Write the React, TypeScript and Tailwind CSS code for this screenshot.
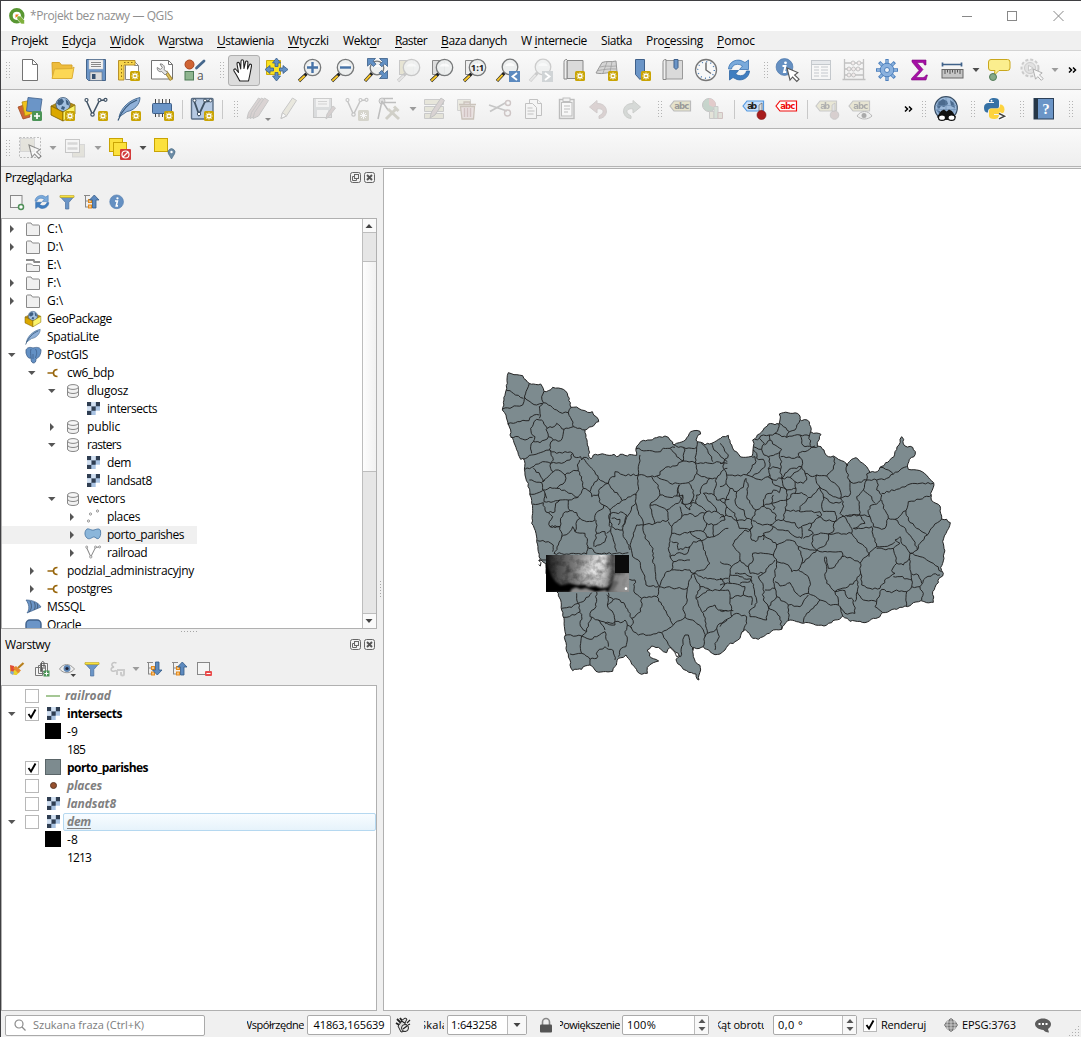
import React, { useLayoutEffect, useRef } from 'react';

/* ---------- text helper: spreads a label over a given width ---------- */
function Fit({ w, children, className = '' }: { w: number; children: string; className?: string }) {
  const ref = useRef<HTMLSpanElement>(null);
  useLayoutEffect(() => {
    const el = ref.current;
    if (!el) return;
    el.style.letterSpacing = '0px';
    const natural = el.getBoundingClientRect().width;
    el.style.letterSpacing = (w - natural) / children.length + 'px';
  }, [w, children]);
  return (
    <span ref={ref} className={'inline-block shrink-0 whitespace-pre ' + className}>
      {children}
    </span>
  );
}

/* ---------- icon primitives ---------- */
type P = { children?: React.ReactNode };
const I = ({ children }: P) => (
  <svg viewBox="0 0 24 24" className="h-6 w-6 shrink-0 overflow-visible" fill="none">
    {children}
  </svg>
);
const S = ({ children }: P) => (
  <svg viewBox="0 0 16 16" className="h-4 w-4 shrink-0 overflow-visible" fill="none">
    {children}
  </svg>
);
const Star = ({ x = 13, y = 13 }: { x?: number; y?: number }) => (
  <g transform={`translate(${x} ${y})`}>
    <rect width="10" height="10" rx="1.500" fill="#c9a404" />
    <path d="M5 1.500v7M1.500 5h7M2.500 2.500l5 5M7.500 2.500l-5 5" stroke="#fff" strokeWidth="1.100" />
    <circle cx="5" cy="5" r="1.100" fill="#c9a404" />
  </g>
);
const Lens = ({ cx = 14.5, cy = 9.5, r = 8.2, dim = false }: { cx?: number; cy?: number; r?: number; dim?: boolean }) => (
  <>
    <path d={`M1 23L${cx - r * 0.72} ${cy + r * 0.75}`} stroke={dim ? '#aaa' : '#222'} strokeWidth="3.2" />
    <path d={`M1.3 22.700L${cx - r * 0.95} ${cy + r * 1}`} stroke={dim ? '#ddd' : '#f5c52a'} strokeWidth="2" />
    <circle cx={cx} cy={cy} r={r} fill="#eceeee" fillOpacity=".93" stroke={dim ? '#aaa' : '#77797a'} strokeWidth="1.3" />
    <path d={`M${cx - r * 0.6} ${cy - 1}a${r * 0.65} ${r * 0.6} 0 0 1 ${r * 1.2} 0`} fill="#fff" opacity=".75" />
  </>
);
const Cursor = ({ x = 11, y = 10 }: { x?: number; y?: number }) => (
  <path transform={`translate(${x} ${y})`} d="M0 0l3 12 2.6-3 4.2 4.4 2.2-2.2-4.4-4.2 3.2-2.4z" fill="#fff" stroke="#555" strokeWidth="1.1" />
);

const NewFile = () => <I><path d="M4.5 1.5h10l5 5v16h-15z" fill="#fff" stroke="#737373" /><path d="M14.5 1.5v5h5" stroke="#737373" /></I>;
const Folder = () => <I><path d="M1 4.500h7.500l2 2.500H21v4H5L1.500 20z" fill="#eebc3c" stroke="#d6a32b" /><path d="M1 20.500l2.500-9.500 17.500-.5 2-1.500-2 11.500z" fill="#fcd755" stroke="#dcae35" /></I>;
const Save = () => <I><path d="M2.500 1.500h19v21h-17l-2-2z" fill="#6b95c7" stroke="#45658b" /><rect x="5" y="2" width="14" height="9" fill="#f3f3f3" stroke="#ccc" strokeWidth=".5" /><path d="M7 4.500h10M7 6.500h10M7 8.500h10" stroke="#888" /><rect x="6" y="14" width="12" height="8.500" fill="#dcdcdc" stroke="#5b6b80" strokeWidth=".6" /><rect x="8" y="16" width="3.500" height="5" fill="#35506f" /></I>;
const Layout = () => <I><path d="M8.500 3.500h9l4 4v14h-13z" fill="#fff" stroke="#888" /><path d="M17.500 3.500v4h4" stroke="#888" /><path d="M1.500 2.500h16.500v4.500h-11v15H1.500z" fill="#f7d54b" stroke="#b8912a" /><path d="M7 4.500h1.500M10.500 4.500h1.500M14 4.500h1.500M4.500 7v1.500M4.500 10.500v1.500M4.500 14v1.500M4.500 17.500v1.500" stroke="#8c6d1a" /><Star /></I>;
const Manager = () => <I><path d="M1.500 2.500h17l4 4v14.500h-21z" fill="#fff" stroke="#737373" /><path d="M18.500 2.500v4h4" stroke="#737373" /><path d="M15.500 13.500l6 8.500" stroke="#a5842a" strokeWidth="3.600" /><path d="M15.500 13.500l5.500 8" stroke="#dcc160" strokeWidth="1.600" /><path d="M10 6c3-.5 5.500 2.500 4 5.500l3.500 3-2.300 2.500-3.500-3.500C9 14.500 6.800 12 7.300 9.500l3 2 2-2z" fill="#e5e5e5" stroke="#777" strokeWidth=".9" /></I>;
const StyleIcon = () => <I><circle cx="6.500" cy="6.500" r="4.500" fill="#cf6434" stroke="#a8441d" /><path d="M13.500 10l7.500-7" stroke="#46688d" strokeWidth="2.800" strokeLinecap="round" /><rect x="2" y="13.500" width="8.500" height="8.500" fill="#8fb58f" stroke="#4d7a55" /><text x="14" y="21.500" fontSize="12" fill="#555" fontFamily="Open Sans, sans-serif">a</text></I>;
const Hand = () => <I><path d="M7.500 21.500L4.500 16 2 12c-1-1.600 1-2.700 2-1.500l2.500 2.800L5 5c-.3-1.900 2.100-2.200 2.500-.5l1.200 5.500L9 2.200c.1-1.900 2.400-1.900 2.600 0l.4 7.200L13.500 3c.5-1.700 2.600-1.200 2.400.5l-.4 6.500 1.800-4c.7-1.500 2.600-.7 2.200.9l-1.500 8.100-1.500 7H8z" fill="#fff" stroke="#222" strokeWidth="1.100" strokeLinejoin="round" /></I>;
const PanSel = () => <I><path d="M1.500 2.500h14v14h-14z" fill="#fbe21e" stroke="#cdab0d" /><path d="M11.500 0l4 5h-2.500v3.500h-3V5H7.500zM11.500 23l4-5h-2.500v-3.500h-3V18H7.500zM0 11.500l5-4V10h3.500v3H5v2.500zM23 11.500l-5-4V10h-3.500v3H18v2.500z" fill="#6290c4" stroke="#3b5e88" strokeWidth=".8" /></I>;
const ZoomIn = () => <I><Lens /><path d="M14.500 4v11M9 9.500h11" stroke="#4673a8" strokeWidth="2.400" /></I>;
const ZoomOut = () => <I><Lens /><path d="M9 9.500h11" stroke="#4673a8" strokeWidth="2.400" /></I>;
const ZoomFull = () => <I><Lens cx={13} cy={10} r={6.800} /><path d="M3.500.5h8l-2.500 2.600 3 3-2.500 2.500-3-3-3 2.500zM23.500.5v8l-2.700-2.700-3 3-2.200-2.200 3-3L15.500.5zM23.500 20.500h-8l2.700-2.700-3-3 2.400-2.300 3 3 2.900-2.900z" fill="#6290c4" stroke="#3b5e88" strokeWidth=".8" /></I>;
const ZoomSel = () => <I><g opacity=".6"><rect x="2.500" y="2.500" width="14" height="14" fill="#ddd9bd" stroke="#aaa" /><Lens dim /></g></I>;
const ZoomLayer = () => <I><path d="M2.500 2.500h12v14h-12z" fill="#ddd" stroke="#888" /><Lens /></I>;
const ZoomNative = () => <I><path d="M2.500 2.500h12v14h-12z" fill="#eee" stroke="#888" /><Lens /><text x="14.500" y="13" fontSize="9.500" fontWeight="700" fill="#222" textAnchor="middle" fontFamily="Open Sans, sans-serif">1:1</text></I>;
const ZoomLast = () => <I><Lens cx={14} cy={9} r={7.800} /><rect x="13" y="13" width="11" height="11" fill="#5c8abf" /><path d="M21 15l-4.500 3.500L21 22" stroke="#fff" strokeWidth="1.900" /></I>;
const ZoomNext = () => <I><g opacity=".55"><Lens cx={14} cy={9} r={7.800} dim /></g><rect x="13" y="13" width="11" height="11" fill="#d0d4d6" /><path d="M16 15l4.500 3.500L16 22" stroke="#fff" strokeWidth="1.900" /></I>;
const NewMap = () => <I><path d="M5 2.500h16v18H5z" fill="#dadada" stroke="#888" /><path d="M5 1.500c-2.500 0-3 1-3 3v16.500h3V3" fill="#eee" stroke="#888" /><Star x={13} y={13} /></I>;
const New3D = () => <I><path d="M7 4.500c5-2 9 0 14-1.500l1 11c-7-1-13 3-21 1z" fill="#d5d5d5" stroke="#999" /><path d="M12 4l-4 11M17 3.500l-2 11M5 9c6-2 10 0 16-1M3 12.500c6-1 12-2 18-1.500" stroke="#999" strokeWidth=".7" /><Star x={13} y={13} /></I>;
const Bookmark = () => <I><path d="M7.500 1.500h9v15l-4.500 5-4.500-5z" fill="#6b95c7" stroke="#3f608a" /><Star x={13} y={13} /></I>;
const Bookmarks = () => <I><path d="M4 2.500h17.500v18.500H4z" fill="#dadada" stroke="#999" /><path d="M5 1.500c-2.500 0-3 1-3 3v17h3z" fill="#eee" stroke="#888" /><path d="M13 1.500h4v8l-2 2-2-2z" fill="#6b95c7" stroke="#3f608a" /></I>;
const Clock = () => <I><circle cx="12" cy="12" r="10.500" fill="#f8f8f8" stroke="#777" strokeWidth="1.300" /><circle cx="12" cy="12" r="8.300" stroke="#4d7eb5" strokeWidth="1.400" strokeDasharray="1 3.345" /><path d="M12 4.500V12l5 3.500" stroke="#666" strokeWidth="1.400" /></I>;
const RefreshG = () => <g><path d="M1.500 11C2 4 8.500 1 14 2.500l4 2L21.500 2v9.500h-9l3-3.500C11.500 5 5.500 6 4.500 11z" fill="#7aaadb" stroke="#3b73b3" strokeWidth=".8" /><path d="M22.500 13C22 20 15.500 23 10 21.500l-4-2L2.500 22v-9.500h9l-3 3.500c4 3 10 2 11-3z" fill="#3f7dc0" stroke="#2f67a6" strokeWidth=".8" /></g>;
const Refresh = () => <I><RefreshG /></I>;
const InfoDisc = () => <g><circle cx="8.500" cy="9" r="8.400" fill="#6590c2" stroke="#4a76aa" strokeWidth=".7" /><circle cx="9.500" cy="4.800" r="1.400" fill="#fff" /><path d="M6.500 8h3l-1.500 6h2.200" stroke="#fff" strokeWidth="1.900" /></g>;
const Identify = () => <I><InfoDisc /><Cursor x={11} y={10} /></I>;
const Table = () => <I><g opacity=".6"><rect x="2.500" y="2.500" width="19" height="19" fill="#fafafa" stroke="#a5acb3" /><rect x="3" y="3" width="18" height="3.500" fill="#dde1e6" /><path d="M5 9h5M5 12h5M5 15h5M5 18h5M12 9h7M12 12h7M12 15h7M12 18h7M3 6.500h18" stroke="#a5acb3" strokeWidth="1.200" /></g></I>;
const Abacus = () => <I><g opacity=".55" stroke="#999"><path d="M2.500 1v20M21.500 1v20M2.500 5h19M2.500 11h19M2.500 17h19M.5 21.500h23" strokeWidth="1.300" /><g fill="#f0e4e4"><circle cx="11" cy="5" r="2" /><circle cx="17" cy="5" r="2" /><circle cx="7" cy="11" r="2" /><circle cx="11.500" cy="11" r="2" /><circle cx="16" cy="11" r="2" /><circle cx="7" cy="17" r="2" /><circle cx="11.500" cy="17" r="2" /></g></g></I>;
const Gear = () => <I><g stroke="#4d80bd" strokeWidth="3.300"><path d="M12 1v22M1 12h22M4.200 4.200l15.600 15.600M19.800 4.200L4.200 19.800" /></g><g stroke="#8ab1de" strokeWidth="1.800"><path d="M12 2v20M2 12h20M5 5l14 14M19 5L5 19" /></g><circle cx="12" cy="12" r="6.800" fill="#8ab1de" stroke="#4d80bd" /><circle cx="12" cy="12" r="2.500" fill="#eff3f8" stroke="#4d80bd" /></I>;
const Sigma = () => <I><path d="M4 2h14v5h-1.500c-.5-2-1.500-2.500-3.500-2.500H9l6 7-7 8h6.500c2 0 3-1 3.500-2.500h1.500L18 22H3.500v-1.500l7.500-8L4 4z" fill="#a50fa5" stroke="#7d0a7d" strokeWidth=".6" /></I>;
const Ruler = () => <I><path d="M1.500 6.500h19M1.500 4.500v4M20.500 4.500v4" stroke="#3f6189" strokeWidth="1.700" /><rect x="1" y="11.500" width="21" height="8.500" fill="#c6c6c6" stroke="#666" /><path d="M4 12v4M6.500 12v2.500M9 12v4M11.500 12v2.500M14 12v4M16.500 12v2.500M19 12v4" stroke="#555" /></I>;
const Tip = () => <I><path d="M4 1.500h16.500a2.500 2.500 0 0 1 2.500 2.500v6a2.500 2.500 0 0 1-2.500 2.500H12l-5 5 1-5H4A2.500 2.500 0 0 1 1.500 10V4A2.500 2.500 0 0 1 4 1.500z" fill="#fbee8e" stroke="#c9a71d" /><circle cx="6" cy="19" r="3.500" fill="#86a987" stroke="#537b58" /></I>;
const GearRun = () => <I><g opacity=".45"><circle cx="10" cy="10" r="8.500" fill="#e5e5e5" stroke="#999" strokeWidth="2" strokeDasharray="3 2" /><circle cx="10" cy="10" r="5.500" fill="#ccc" stroke="#999" /><path d="M8.500 7.500l4.500 2.500-4.500 2.500z" fill="#fff" stroke="#777" strokeWidth=".7" /><g transform="translate(13 11) scale(.85)"><Cursor x={0} y={0} /></g></g></I>;

const DataSrc = () => <I><path d="M0 10l9-3 3 13-7 2z" fill="#cf6434" stroke="#a04a21" strokeWidth=".8" /><path d="M4 5l10-2 2 13-9 3z" fill="#f0c21b" stroke="#b58d12" strokeWidth=".8" /><path d="M10 .500l14 1.500-2 14-13.500-2z" fill="#6b95c7" stroke="#3f608a" strokeWidth=".8" /><rect x="14" y="14" width="10" height="10" rx="1.500" fill="#4b9457" /><path d="M19 16v6M16 19h6" stroke="#fff" strokeWidth="1.700" /></I>;
const BoxG = () => (
  <g>
    <path d="M0 9L12 3l12 5-12 7z" fill="#b58d12" stroke="#7b5d00" strokeWidth=".6" />
    <circle cx="12" cy="7.500" r="7" fill="#a3c0e0" stroke="#3e5876" strokeWidth=".8" />
    <path d="M7 3l4-1.500 2 3-2 3-3 1-2-2zM14.500 2l3 2.500.5 4-2.500-1zM11 9l3 1-1 3-3-1z" fill="#3f5f82" />
    <path d="M0 9l12 6v9L0 18z" fill="#dba800" stroke="#7b5d00" strokeWidth=".8" />
    <path d="M12 15l12-7v9l-12 7z" fill="#fbf36b" stroke="#8a7000" strokeWidth=".8" />
  </g>
);
const NewGpkg = () => <I><BoxG /><Star x={14} y={14} /></I>;
const Vg = ({ c = '#3f5163' }: { c?: string }) => <g stroke={c} fill="#fff" strokeWidth="1.200"><path d="M2.500 4L8.500 17.500 15.500 3.500 20.500 3" fill="none" strokeWidth="1.500" /><circle cx="2.500" cy="3" r="1.500" /><circle cx="8.500" cy="17.500" r="1.700" /><circle cx="15.500" cy="3" r="1.500" /><circle cx="21.500" cy="2.800" r="1.500" /></g>;
const NewShp = () => <I><Vg /><Star x={14} y={14} /></I>;
const FeatherG = () => <g><path d="M2 20C4 11 12 3 23 .5c0 7-6 13-13 14z" fill="#8fb0d8" stroke="#43688f" strokeWidth=".9" /><path d="M1 23.500C5 13 12 6 20 3" stroke="#345678" strokeWidth="1.200" /></g>;
const NewSpat = () => <I><FeatherG /><Star x={14} y={14} /></I>;
const Chip = () => <I><path d="M5.500 2v18M9 2v18M12.500 2v18M16 2v18M19.500 2v18" stroke="#444" strokeWidth="1" /><rect x="2.500" y="6.500" width="19" height="10" rx="1" fill="#6b95c7" stroke="#3f608a" /><Star x={14} y={14} /></I>;
const Virtual = () => <I><rect x="1.500" y="1.500" width="21.500" height="20.500" rx="1" fill="#b5c9e2" stroke="#5b6f86" strokeWidth="1.400" /><path d="M4 3.500l5 14 6-13 5-.5" stroke="#3f5163" strokeWidth="1.800" /><g fill="#fff" stroke="#3f5163"><circle cx="4.500" cy="3.500" r="1.500" /><circle cx="9" cy="17" r="1.700" /><circle cx="15" cy="3.500" r="1.500" /><circle cx="20.500" cy="3.500" r="1.500" /></g><Star x={14} y={14} /></I>;
const pencil = 'M2 21.500l1.500-6L13.500 1l4 2.500L7.500 19z';
const Pencils = () => <I><g opacity=".42" fill="#b5a5a5" stroke="#888"><path d={pencil} transform="translate(-1 0)" /><path d={pencil} transform="translate(2 0)" /><path d={pencil} transform="translate(5 0)" /></g><path d="M19 21h6l-3 3z" fill="#888" /></I>;
const Pencil = () => <I><g opacity=".5"><path d={pencil} fill="#dedbc8" stroke="#999" /><path d="M2 21.500l1.500-6 4 3.500z" fill="#fff" stroke="#999" /></g></I>;
const SaveEdit = () => <I><g opacity=".38"><rect x="1.500" y="1.500" width="18" height="19" fill="#b5b9bd" stroke="#888" /><rect x="4" y="2" width="13" height="8" fill="#eee" /><path d="M6 4.500h9M6 7h9" stroke="#999" /><rect x="5" y="13" width="11" height="7" fill="#eee" /><path d="M14 22l1-5 6-8 2.500 2-6 8z" fill="#a99" stroke="#888" /></g></I>;
const VNew = () => <I><g opacity=".38"><Vg c="#777" /><rect x="13" y="13" width="11" height="11" rx="1.500" fill="#a8a690" /><path d="M18.500 15v7M15 18.500h7M16 16l5 5M21 16l-5 5" stroke="#fff" /></g></I>;
const Vertex = () => <I><g opacity=".5" stroke="#888"><circle cx="4" cy="4" r="3" fill="#ccc" /><path d="M4 4L0 22M4 4l6 9M6 5.500h12M5 1.500h10" strokeWidth="1.500" /><path d="M8 22L18 12M10 12l11 10M16 9.500l4.500 4.500" strokeWidth="3" stroke="#b0ae9f" /></g></I>;
const EditAttr = () => <I><g opacity=".45"><path d="M1.500 2.500h19v5h-19zM1.500 9.500h19v5h-19zM1.500 16.500h19v5h-19z" fill="#d5d3bb" stroke="#999" /><path d="M7 21l1.500-6L18 1l3.500 2.500L12 18z" fill="#b9acac" stroke="#888" /></g></I>;
const Trash = () => <I><g opacity=".45"><path d="M1.500 2.500h13v11h-13z" fill="#dedcc8" stroke="#aaa" /><path d="M3 7.500h17M8 7V5h6v2M4.500 9.500h14l-1 12.500H6z" fill="#dcc" stroke="#987" strokeWidth="1.300" /><path d="M8.500 11v9M11.500 11v9M14.500 11v9" stroke="#a88" strokeWidth="1.500" /></g></I>;
const Cut = () => <I><g opacity=".5" stroke="#888" strokeWidth="1.400"><path d="M0 8l18 6M1 14.500L17 5.500" strokeWidth="1.800" stroke="#999" /><circle cx="19" cy="6" r="2.500" stroke="#a99" /><circle cx="18.500" cy="16" r="3" stroke="#a99" /></g></I>;
const Copy = () => <I><g opacity=".55" stroke="#999" fill="#f5f5f5"><path d="M7.500 2.500h8l4 4v12h-12z" /><path d="M3.500 6.500h7l4 4v11h-11z" /><path d="M5.500 11h5M5.500 14h7M5.500 17h6M15.500 2.500v4h4" /></g></I>;
const Paste = () => <I><g opacity=".6" stroke="#999" fill="#eee"><rect x="4.500" y="2.500" width="14.500" height="19" strokeWidth="1.400" /><rect x="6.500" y="5.500" width="10.500" height="13.500" fill="#fafafa" /><rect x="8" y="1" width="7" height="3.500" /><path d="M9 9h6M9 12h6M9 15h4" /></g></I>;
const Undo = () => <I><path opacity=".6" d="M9 3.500L1.500 10l7.500 6v-4c4-1 8 1 5 5l-3 2v2.500c9-.5 10-12 2-14.500-1.300-.4-2.500-.5-4-.3z" fill="#cbbcbc" stroke="#b8b0b0" /></I>;
const Redo = () => <I><path opacity=".6" d="M12 3.500L19.500 10 12 16v-4c-4-1-8 1-5 5l3 2v2.500C1 21 0 9.500 8 7c1.300-.4 2.500-.5 4-.3z" fill="#c2c8c4" stroke="#b0b3b0" /></I>;
const Tag = ({ t = 'abc', fill = '#e5e2cb', stroke = '#bbb', color = '#999' }: { t?: string; fill?: string; stroke?: string; color?: string }) => (
  <g><path d="M1 9l4-5h16.500v10H5z" fill={fill} stroke={stroke} strokeWidth="1.200" /><text x="5.200" y="12" fontSize="8.500" fontWeight="700" fill={color} fontFamily="DejaVu Sans, sans-serif" textLength={t === 'abc' ? 15 : 10}>{t}</text></g>
);
const LabelDim = () => <I><Tag /></I>;
const Diagram = () => <I><g opacity=".45"><circle cx="7" cy="8" r="6.500" fill="#8fae9b" stroke="#888" /><path d="M7 8V1.500A6.500 6.500 0 0 1 13 11z" fill="#c99" /><path d="M7.500 14.500h4.500v7H7.500z" fill="#d5d3bb" stroke="#999" /><path d="M12 9.500h4v12h-4z" fill="#b5ccb8" stroke="#999" /><path d="M16 15.500h4.500v6H16z" fill="#ccb" stroke="#a88" /></g></I>;
const LabelPin = () => <I><Tag t="ab" fill="#c9e0fb" stroke="#5499e0" color="#222" /><path d="M17 8l3-2v8h-3z" fill="#ddd" stroke="#555" strokeWidth=".6" /><circle cx="19.500" cy="18" r="4.500" fill="#a81c1c" stroke="#7d1010" strokeWidth=".6" /></I>;
const LabelRed = () => <I><Tag fill="#fff" stroke="#f00d0d" color="#f00d0d" /></I>;
const LabelPinDim = () => <I><g opacity=".75"><Tag t="ab" /><circle cx="19.500" cy="18" r="4.300" fill="#cfc4c4" stroke="#bbb" /><path d="M17 8l3-2v8h-3z" fill="#ddd" stroke="#aaa" strokeWidth=".6" /></g></I>;
const LabelEye = () => <I><g opacity=".8"><Tag /><path d="M9 19c4-6 11-6 15 0-4 4-11 4-15 0z" fill="#eee" stroke="#aaa" /><circle cx="16" cy="18.500" r="2.500" fill="#999" /></g></I>;
const MetaSearch = () => (
  <I>
    <circle cx="12" cy="11" r="11.300" fill="#9bb9da" stroke="#384d63" strokeWidth="1.200" />
    <path d="M4 5l5-3 4 2 1 3-4 3-3-1-2 3-2-2zM16 3l4 3 1 5-4-2zM2 13l4 1v3z" fill="#4b6b8e" />
    <path d="M1 8.500h22M1 12.500h22M12 0v20M6 1.500c-3 6-3 12 0 18M18 1.500c3 6 3 12 0 18" stroke="#6c8db3" strokeWidth=".6" />
    <path d="M3 20l4-6 3-1.500 2.500 2 2.500-2L18 14l4 6-3 3H6z" fill="#111" />
    <ellipse cx="8" cy="20.700" rx="3.500" ry="2.700" fill="#fff" stroke="#111" strokeWidth="1.200" />
    <ellipse cx="17.500" cy="20.700" rx="3.500" ry="2.700" fill="#fff" stroke="#111" strokeWidth="1.200" />
    <path d="M11.500 18.500h2.500v3h-2.500z" fill="#111" />
  </I>
);
const Python = () => <I><path d="M6 5c0-3 2-4 5-4s5 1 5 3v5c0 2-1 2.500-3 2.500H8c-2.500 0-3 1.500-3 4-3 0-4-2-4-5 0-3 2-4.500 4.500-4.500H11V5z" fill="#3571a5" /><path d="M16 18c0 3-2 4-5 4s-5-1-5-3v-5c0-2 1-2.500 3-2.500h5c2.500 0 3-1.500 3-4 3 0 4.500 2 4.500 5s-2 4.500-4.500 4.500H11V18z" fill="#fdd33f" /><circle cx="8.500" cy="3.700" r="1" fill="#fff" /><path d="M16 16.500l5.500 2.700-5.500 2.700" stroke="#fff" strokeWidth="3.500" /><path d="M16 16.500l5.500 2.700-5.500 2.700" stroke="#444" strokeWidth="1.500" /></I>;
const Help = () => <I><rect x="2" y="1.500" width="19.500" height="20.500" fill="#6b95c7" stroke="#2c4059" /><rect x="2" y="1.500" width="4" height="20.500" fill="#253647" /><text x="14" y="17" fontSize="15" fontWeight="700" textAnchor="middle" fill="#fff" fontFamily="Liberation Serif, serif">?</text></I>;

const SelRect = () => <I><g opacity=".5"><rect x="2.500" y="2.500" width="14" height="13" fill="#d5d3c5" stroke="#bbb" /><path d="M1.500 1.500h21v20h-21z" stroke="#888" strokeDasharray="2 1.500" /></g><g opacity=".6"><Cursor x={11} y={9} /></g></I>;
const SelForm = () => <I><g opacity=".5"><rect x="9.500" y="8.500" width="12" height="12.500" fill="#d5d3c5" stroke="#bbb" /><rect x="2.500" y="3.500" width="14" height="13" fill="#f5f5f5" stroke="#999" /><path d="M4.500 7.500h10M4.500 12.500h10" stroke="#bbb" strokeWidth="2.500" /></g></I>;
const Desel = () => <I><rect x="1.500" y="2.500" width="13" height="13" fill="#fce13d" stroke="#c9a404" /><rect x="5.500" y="6.500" width="13" height="13" fill="#fce13d" stroke="#c9a404" /><rect x="12" y="13" width="11" height="11" rx="1" fill="#d33b3b" /><circle cx="17.500" cy="18.500" r="3.500" stroke="#fff" strokeWidth="1.200" /><path d="M15 21l5-5" stroke="#fff" strokeWidth="1.200" /></I>;
const SelLoc = () => <I><rect x="1.500" y="2.500" width="13" height="13" fill="#fce13d" stroke="#c9a404" /><path d="M18.500 23l-3-5a3.500 3.500 0 1 1 6 0z" fill="#6b8ba5" stroke="#46667f" strokeWidth=".6" /><circle cx="18.500" cy="16" r="1.200" fill="#fff" /></I>;

/* ---------- toolbars ---------- */
const Cell = ({ children }: P) => <div className="flex w-[33px] shrink-0 items-center pl-[3px]">{children}</div>;
const GripDots = () => (
  <div className="grid shrink-0 grid-cols-2 gap-x-[2px] gap-y-[2px]">
    {Array.from({ length: 12 }, (_, i) => <i key={i} className="h-px w-px bg-[#b4b4b4]" />)}
  </div>
);
const Grip = ({ w = 'w-4 pl-[7px]' }: { w?: string }) => <div className={'flex shrink-0 items-center ' + w}><GripDots /></div>;
const Sep = () => <div className="flex w-[7px] shrink-0 items-center pl-[2px]"><i className="h-[19px] w-px bg-[#c8c8c8]" /></div>;
const Drop = ({ dark = false }: { dark?: boolean }) => (
  <div className="flex w-3 shrink-0 items-center pl-px">
    <svg viewBox="0 0 8 4" className="h-1 w-2"><path d="M.5 0h7L4 4z" fill={dark ? '#4d4d4d' : '#9c9c9c'} /></svg>
  </div>
);
const More = () => (
  <svg viewBox="0 0 9 8" className="h-2 w-[9px]" fill="none"><path d="M1 1.500l2.500 2.500L1 6.500M5 1.500l2.500 2.500L5 6.500" stroke="#000" strokeWidth="1.500" /></svg>
);
const Bar = ({ children, h = 'h-[39px]' }: P & { h?: string }) => (
  <div className={'flex shrink-0 border-b border-[#b4b4b4] bg-linear-to-b from-[#fafafa] to-[#eeeeee] ' + h}>{children}</div>
);
const cells = (list: React.FC[]) => list.map((C, i) => <Cell key={i}><C /></Cell>);

/* ---------- menu ---------- */
const menus: [string, string, string, number][] = [
  ['Pro', 'j', 'ekt', 37], ['', 'E', 'dycja', 34], ['', 'W', 'idok', 34], ['W', 'a', 'rstwa', 45], ['', 'U', 'stawienia', 57],
  ['', 'W', 'tyczki', 41], ['Wekt', 'o', 'r', 38], ['', 'R', 'aster', 32], ['', 'B', 'aza danych', 66], ['W ', 'i', 'nternecie', 66],
  ['Siatka', '', '', 31], ['Pro', 'c', 'essing', 57], ['', 'P', 'omoc', 38],
];
function MenuItem({ m }: { m: [string, string, string, number] }) {
  const ref = useRef<HTMLSpanElement>(null);
  useLayoutEffect(() => {
    const el = ref.current!;
    el.style.letterSpacing = '0px';
    el.style.letterSpacing = (m[3] - el.getBoundingClientRect().width) / (m[0] + m[1] + m[2]).length + 'px';
  }, [m]);
  return <span ref={ref} className="shrink-0 whitespace-pre">{m[0]}<u className="underline-offset-2">{m[1]}</u>{m[2]}</span>;
}

/* ---------- small icons ---------- */
const FolderS = () => <S><path d="M1.500 3c0-.6.400-1 1-1h3.500l1.500 2h6c.600 0 1 .4 1 1v9.500h-13z" fill="#f0f0f0" stroke="#8a8a8a" /></S>;
const DriveS = () => <S><path d="M1.500 7h5l1.500 1.500h6.500V14.500h-13z" fill="#f0f0f0" stroke="#8a8a8a" /><path d="M1 3h7.500l1 2H15" stroke="#8a8a8a" strokeWidth="2.200" /></S>;
const GpkgS = () => <S><g transform="scale(.66)"><BoxG /></g></S>;
const FeatherS = () => <S><g transform="scale(.66)"><FeatherG /></g></S>;
const PgS = () => <S><path d="M1 3c1-3 5-3 7-2 3-1 7-1 8 2 0 4-2 8-4 8l-1 1c0 3-1 4-3 4-2-1-2-3-2-5-3 1-4-2-5-5z" fill="#6390c4" stroke="#3f608a" strokeWidth=".8" /><path d="M6 2c-1 3 0 6 0 9M10.500 2c2 3 1 6 0 9M8 7v5" stroke="#3f608a" strokeWidth=".8" /></S>;
const ConnS = () => <S><path d="M2.500 8h6M12.500 4.500c-2.500 0-4 1.300-4 3.500s1.500 3.500 4 3.500" stroke="#98660c" strokeWidth="1.700" /></S>;
const DbS = () => <S><path d="M2.500 4v8c0 1.500 2.500 2.500 5.500 2.500s5.500-1 5.500-2.500V4" fill="#f1f1f1" stroke="#888" /><ellipse cx="8" cy="4" rx="5.500" ry="2.400" fill="#f6f6f6" stroke="#888" /><path d="M2.500 8c0 1.500 2.500 2.500 5.500 2.500s5.500-1 5.500-2.500" stroke="#888" /></S>;
const RasS = () => <S><rect x="2" y="1" width="13" height="13" fill="#a9c3e3" /><path d="M2 1h4.300v4.300H2zM10.700 1H15v4.300h-4.300zM6.300 5.300h4.400v4.400H6.300zM2 9.700h4.300V14H2z" fill="#2f3e52" /><path d="M6.300 1h4.400v4.300H6.300zM2 5.300h4.300v4.400H2z" fill="#d3e1f2" /><path d="M10.700 9.700H15V14h-4.300z" fill="#fff" /></S>;
const PtS = () => <S><g stroke="#888" strokeWidth=".9" fill="#fff"><circle cx="3.500" cy="12" r="1.100" /><circle cx="5.500" cy="5" r="1.100" /><circle cx="12.500" cy="2" r="1.100" /></g></S>;
const PolyS = () => <S><path d="M1 3c2-3 5 1 8 0 3-1 6-2 6.500 1 .5 3 0 6-2 7.500-2 1-3-2-5-1.500-2 .5-4 3-6.500 1S-.5 5 1 3z" fill="#8bb6da" stroke="#4f7ba6" strokeWidth=".9" /></S>;
const LineS = () => <S><g transform="scale(.68)"><Vg c="#888" /></g></S>;
const MsS = () => <S><path d="M1 1c6 0 12 2 15 7L2 14c3-4 2-9-1-13z" fill="#6b95c7" stroke="#3f608a" strokeWidth=".7" /><path d="M5 2c2 4 2 8-1 11M9 3c2 3 1 7 0 8M12 4.500c1 2 1 3 0 5" stroke="#345" strokeWidth=".7" /></S>;
const OraS = () => <S><rect x="1" y="3" width="15" height="11" rx="4" fill="#6b95c7" stroke="#3f608a" strokeWidth="1.400" /></S>;

const Arr = ({ open, none }: { open?: boolean; none?: boolean }) => (
  <svg viewBox="0 0 9 9" className="h-[9px] w-[9px] shrink-0">{none ? null : open ? <path d="M1 2h7.500L4.750 6z" fill="#555" /> : <path d="M3 0v8L7 4z" fill="#555" />}</svg>
);
const pads = ['pl-[5px]', 'pl-[25px]', 'pl-[45px]', 'pl-[65px]'];
type Row = [number, 'o' | 'c' | 'n', React.FC, string, number];
const tree: Row[] = [
  [0, 'c', FolderS, 'C:\\', 16], [0, 'c', FolderS, 'D:\\', 16], [0, 'n', DriveS, 'E:\\', 14], [0, 'c', FolderS, 'F:\\', 14], [0, 'c', FolderS, 'G:\\', 16],
  [0, 'n', GpkgS, 'GeoPackage', 65], [0, 'n', FeatherS, 'SpatiaLite', 52], [0, 'o', PgS, 'PostGIS', 41], [1, 'o', ConnS, 'cw6_bdp', 47],
  [2, 'o', DbS, 'dlugosz', 41], [3, 'n', RasS, 'intersects', 50], [2, 'c', DbS, 'public', 33], [2, 'o', DbS, 'rasters', 34], [3, 'n', RasS, 'dem', 24],
  [3, 'n', RasS, 'landsat8', 45], [2, 'o', DbS, 'vectors', 38], [3, 'c', PtS, 'places', 33], [3, 'c', PolyS, 'porto_parishes', 77], [3, 'c', LineS, 'railroad', 40],
  [1, 'c', ConnS, 'podzial_administracyjny', 127], [1, 'c', ConnS, 'postgres', 45], [0, 'n', MsS, 'MSSQL', 38], [0, 'n', OraS, 'Oracle', 34],
];

function DockTitle({ title, w }: { title: string; w: number }) {
  return (
    <div className="flex h-[22px] shrink-0 items-center pr-[2px] pl-1">
      <Fit w={w} className="leading-4">{title}</Fit>
      <div className="mb-px ml-auto flex gap-[3px]">
        <svg viewBox="0 0 11 11" className="h-[11px] w-[11px]" fill="none" stroke="#666"><rect x=".5" y=".5" width="10" height="10" rx="2" /><rect x="4.500" y="2.500" width="4" height="4" /><path d="M4 4.500H2.500v4h4V7" /></svg>
        <svg viewBox="0 0 11 11" className="h-[11px] w-[11px]" fill="none" stroke="#666"><rect x=".5" y=".5" width="10" height="10" rx="2" /><path d="M3 3l5 5M8 3L3 8" strokeWidth="1.900" stroke="#555" /></svg>
      </div>
    </div>
  );
}
const FilterS = () => <S><path d="M1 2.500h14L9.800 8.500V15H6.500V8.500z" fill="#6b95c7" stroke="#4a6f9c" strokeWidth=".7" /><path d="M1 1.500h14v2H1z" fill="#f8e23c" stroke="#b89a10" strokeWidth=".5" /></S>;
const TreeS = ({ up = false }: { up?: boolean }) => <S><path d="M0 1.500h6M1.500 1.500v12M2 7h3M2 13h3" stroke="#888" /><rect x="4.500" y="5.500" width="3" height="3" fill="#f9c480" stroke="#e28a1c" /><rect x="4.500" y="11" width="3" height="3" fill="#f9c480" stroke="#e28a1c" /><path transform={up ? 'translate(0 15) scale(1 -1)' : undefined} d="M8.500 1h3.500v8h3L10.300 14 5.500 9h3z" fill="#5d8abf" stroke="#345a87" strokeWidth=".8" /></S>;

/* ---------- check boxes and layer rows ---------- */
const Check = ({ on = false }: { on?: boolean }) => (
  <div className="flex h-[14px] w-[14px] shrink-0 items-center justify-center border border-[#b8b8b8] bg-white">
    {on && <svg viewBox="0 0 12 12" className="h-3 w-3" fill="none"><path d="M2.500 6l2.500 3.500L9.500 1.500" stroke="#000" strokeWidth="1.900" /></svg>}
  </div>
);
const Lyr = ({ arrow = false, on = false, icon, name, w, cls = 'italic text-[#808080] font-bold', sel = false }: { arrow?: boolean; on?: boolean; icon: React.ReactNode; name: string; w: number; cls?: string; sel?: boolean }) => (
  <div className="flex h-[18px] items-center pl-[5px]">
    <Arr open none={!arrow} />
    <div className="mb-px ml-[9px]"><Check on={on} /></div>
    <div className="mr-px ml-[5px] flex w-[18px] shrink-0 justify-center">{icon}</div>
    <div className={'flex h-full flex-1 items-center border pl-[3px] ' + (sel ? 'rounded-[2px] border-[#b5d8f0] bg-linear-to-b from-[#f8fcff] to-[#e6f3fb]' : 'border-transparent')}>
      <Fit w={w} className={'leading-4 ' + cls}>{name}</Fit>
    </div>
  </div>
);
const Leg = ({ black = false, t, w }: { black?: boolean; t: string; w: number }) => (
  <div className="flex h-[18px] items-center pl-[43px]">
    <i className={'mr-[6px] mb-[2px] h-4 w-4 shrink-0 ' + (black ? 'bg-black' : '')} />
    <Fit w={w} className="leading-4">{t}</Fit>
  </div>
);

/* ---------- map geometry ---------- */
const outline = `55,38 72,44 98,47 102,56 108,60 112,66 118,70 130,72 152,72 160,86 162,94 175,92 188,82 205,84 220,88 232,100 238,115 240,135 243,142 260,141 275,150 293,157 307,155 312,166 325,178 326,185 315,192 305,200 285,210 288,225 291,240 292,255 296,270 297,290 303,297 310,285 330,283 350,285 372,283 380,290 390,283 405,286 412,288 425,284 440,286 438,265 447,252 460,241 480,240 500,233 525,228 535,232 540,240 548,246 548,252 552,255 568,248 580,244 595,228 602,215 612,212 630,214 632,222 622,230 618,240 622,245 632,247 645,255 652,250 665,250 680,242 692,235 697,230 715,226 720,242 725,255 732,272 745,282 752,291 775,291 786,289 789,270 790,260 792,250 788,240 795,236 802,225 815,216 823,204 832,198 835,192 855,194 867,192 870,180 868,162 880,158 902,160 922,160 928,165 930,178 935,182 952,180 958,186 962,200 962,215 970,220 980,219 993,223 988,238 982,247 982,258 993,260 1002,270 1006,282 1015,290 1030,288 1045,298 1063,305 1068,310 1072,318 1078,305 1085,298 1098,293 1105,298 1110,305 1130,320 1140,337 1162,335 1170,322 1182,317 1187,308 1198,302 1212,290 1215,275 1227,255 1230,238 1235,230 1241,238 1240,252 1245,258 1268,262 1276,275 1272,290 1258,298 1252,318 1255,328 1280,330 1298,336 1315,352 1331,368 1330,382 1322,400 1324,420 1338,430 1350,438 1352,460 1355,477 1370,478 1381,488 1376,505 1368,520 1358,545 1362,565 1362,595 1358,610 1352,622 1360,640 1358,648 1347,655 1345,668 1335,682 1328,695 1330,727 1310,728 1293,722 1270,728 1260,737 1252,740 1245,738 1230,742 1220,748 1200,752 1178,758 1170,770 1150,775 1125,788 1110,784 1095,783 1080,784 1072,775 1058,768 1048,778 1035,780 1025,788 1015,790 1002,798 985,796 970,792 955,788 940,790 920,785 900,780 887,788 875,808 850,810 838,820 820,830 805,838 788,835 778,820 765,808 755,817 750,835 735,845 715,855 705,870 690,882 675,884 660,875 650,868 640,860 620,866 610,862 608,875 610,890 616,905 622,912 630,916 632,930 627,945 627,960 622,958 618,942 605,938 590,932 580,928 570,915 560,905 558,898 568,890 565,880 550,870 540,862 530,878 520,875 505,862 485,858 472,870 480,880 478,888 490,896 506,903 490,908 480,914 472,922 472,940 455,943 442,935 435,922 425,912 415,895 408,885 400,892 385,895 380,908 374,920 368,934 340,935 318,934 300,915 285,918 275,928 262,928 248,932 240,915 240,900 235,882 228,865 225,840 225,815 222,775 215,750 212,720 205,700 195,690 168,640 168,612 152,598 145,575 140,545 138,520 125,490 128,460 125,430 120,405 115,370 105,345 105,310 100,295 92,298 88,290 75,255 68,235 60,225 62,210 55,192 48,165 37,150 42,120 48,92 52,70 55,38`;
const west = `48,90 60,92 70,100 85,106 100,115|118,70 115,80 108,95 104,108 102,125 98,135 80,138 60,145 38,147|104,112 120,125 140,135 158,130|162,94 155,110 160,128 148,140 150,160 148,175|160,128 175,135 200,150 217,160 235,158 243,142|148,165 132,165 120,172 117,182 90,185 70,190 52,192|148,180 160,185 172,205 180,200|132,185 122,205 124,220 135,230 130,245 122,260 125,280|132,185 140,178 148,180|62,232 85,230 105,240 128,232|172,205 168,208 175,230 165,240 150,248 130,245|200,190 212,200 222,208 218,230 212,242 190,240 175,230|180,200 192,200 200,190|235,158 245,180 250,200 235,205 222,208|250,200 262,205 285,210|190,240 180,255 178,270 160,275 145,280 125,285 100,298|178,270 200,280 225,275 248,280 252,290 272,290 275,300 280,292 297,298|105,328 125,322 145,312 158,305 182,310 190,300 182,270|182,310 215,310 240,300 248,280|182,310 182,325 190,335 175,350 160,365 150,345 130,325|190,335 205,330 225,345 228,355 225,365 210,375 200,385|225,345 245,335 265,332|265,332 262,315 270,300|265,332 275,350 280,385 300,395 310,375 325,355 310,330 300,320 280,295|118,360 155,368 165,360|155,368 158,390 165,400 170,415|158,390 180,382 200,385 230,395 265,412|118,402 140,400 158,392|165,400 162,425 190,425 210,420 235,420 262,413 280,385|128,432 160,428 165,450 175,458 195,455 197,430 210,420|235,420 235,445 240,452 220,460 212,475 210,500 180,500|175,458 188,470 178,485 180,500 210,500 215,530|240,452 260,458 270,475 258,490 255,515 285,520|270,475 290,485 315,480 318,460 340,445 342,435|300,395 305,410 325,405 328,425 340,435 360,450|325,405 330,385 355,370 325,355|355,370 360,355 375,350 375,335 400,345 445,345|355,370 370,390 385,405 395,420|360,450 370,440 400,420 435,402 440,405|450,285 445,320 445,345 445,380 438,410 438,430|445,345 480,350 500,348 510,345 510,335 535,320 555,318 580,303|438,266 470,272 512,275 520,265 540,265 555,262|540,265 560,290 580,303 585,270 580,262 565,262 548,252|580,262 605,265 620,262 622,245|620,262 618,285 615,308 580,303|615,308 640,310 660,310 680,305 695,310 712,310|632,247 650,265 660,285 668,305|665,250 672,270 685,280 692,290 712,305|500,348 515,358 540,370 570,372 595,368 612,355 620,340 615,308|485,350 500,370 508,390 510,405 490,425 480,435|510,405 540,412 560,408 568,375|438,430 445,455 452,470 460,495 495,490 490,475 485,450 480,435 500,435 530,450|530,450 535,480 495,490|560,408 578,405 570,425 545,440 530,450|578,405 575,430 600,430 612,420|595,368 605,385 612,405 602,430|568,375 565,395 578,430|620,340 635,350 660,355 650,370 635,380 632,400 620,405 618,430 602,430|660,355 680,355 700,330 712,325|680,355 675,385 672,405 640,400|672,405 680,420 700,415 718,418|438,430 425,440 415,465 405,490 398,510 375,508 365,500 360,470 362,460|362,460 400,458 410,465 405,480 395,500|365,475 390,478 385,495|360,450 358,490 362,510 370,540 380,575|318,480 320,520 315,540 312,560|320,520 345,515 350,530 345,545 315,560|362,510 350,520|398,510 400,530 412,550 420,570|460,495 462,520 470,540 485,560 490,580 488,600 495,620 497,650 508,680|420,555 428,590 445,600 460,640 468,675 505,680|460,495 440,495 430,520 420,555|535,485 545,500 545,520 540,545 535,565 540,590 550,605 545,630 525,640 508,680|545,500 565,480 575,470 570,440|545,630 600,630 610,640 620,632 640,630|508,680 560,685 592,685 598,660 610,640|508,680 500,710 455,715 435,700 433,680 435,660 418,658|455,715 452,755 425,775 430,790 422,800 430,815 445,825 490,822 515,818 530,810 550,795 585,772 580,740 592,720 592,685|500,710 515,735 530,760 550,795|585,772 615,785 640,810 645,830 640,860|515,818 540,860 560,890 572,890 575,860 585,825 595,825 600,850 608,870|610,640 630,680 618,715 640,760 648,790 652,820 645,830|610,640 640,655 660,655 680,660 715,655|630,680 640,680 660,690 690,692 705,670 690,655|618,715 640,700 660,690|640,755 660,740 675,735 685,750 712,752|652,820 670,815 680,805 690,790 712,780|680,805 688,830 675,850 675,870|370,718 390,720 405,735 415,755 425,775|355,698 352,735 370,760 375,780 375,795 350,790 325,780|320,695 318,740 300,760 300,770 325,780 345,810|305,698 285,720 265,730 260,700|265,730 270,750 275,770 270,790 280,810 290,815|215,745 245,742 265,730|222,772 255,765 270,755|225,826 275,828 290,815 295,790 305,772|275,828 272,850 275,880 240,882|275,828 300,838 320,830 335,820 345,815 355,860|275,880 300,898 320,895 322,875 345,860 350,865 370,872 375,900|345,790 400,785 405,780 412,795 405,815 412,840 408,860 390,870 385,890|352,735 370,718 350,705|412,795 425,803|300,898 300,915|142,542 175,545 190,555 188,575|215,530 205,555 192,580 230,582 250,580 290,582 292,545 285,520|215,530 240,515 248,500 255,515|292,560 310,570 320,580 380,580 415,578|545,545 565,550 565,570 600,560 610,545 635,542|540,590 560,580 590,582 600,560|550,605 575,600 600,600|545,520 570,525 600,515 625,512 640,515|600,515 615,530 635,542 640,560 650,590 660,610 640,630|575,470 600,460 615,470 630,460 650,455|578,430 600,450 602,430|618,430 635,440 650,455 640,470 650,490 640,515|650,490 670,495 672,530 650,530 640,515|650,455 680,455 700,465 705,480 690,485 670,495|640,400 650,415 675,440 680,455|672,530 700,510 715,505|635,542 655,530`;
const east = `0,130 12,145 25,165 12,185 0,190|12,185 10,205 20,225 45,228 80,225 90,215 97,195 108,185 105,170 97,172|20,225 18,250 0,260|18,250 30,265 50,275 70,262 78,235|80,225 90,228 100,232 125,240 150,225 145,205|78,235 85,260 80,290 95,315 100,325 108,330|50,275 45,300 50,318 72,330 80,355 75,362 50,362 45,340 20,320|0,300 15,310 20,320 18,345 0,355|30,265 20,290 15,310|18,345 35,350 50,362 58,385 90,390 98,380 95,360 80,355|108,330 105,345 95,360|98,380 85,395 75,390|108,330 125,320 145,325 165,340 168,362 150,375 120,372 98,362|150,375 160,380 155,390 130,400 135,410|90,390 95,420 108,425 115,410 130,405 130,420|100,140 125,148 133,130 118,115 105,118|118,115 130,105 148,105 165,100 175,85 177,72|148,105 150,120 133,135|150,120 165,135 185,148 180,155 145,170 132,165 125,148|165,100 180,105 200,112 208,95 190,80 178,70|208,95 225,90 240,60|200,112 240,105 268,108 272,95|240,105 245,130 255,140 275,142 285,138|268,108 270,130 275,142 295,139|99,150 110,160 110,175 130,178 135,200 120,215 97,230|145,170 150,190 145,205 165,202 182,208 185,185 178,170 180,155|182,170 215,175 240,172 235,160 255,155 275,142|240,172 248,190 245,200 215,205 195,220 185,235|245,200 255,220 270,228 290,225 320,228 340,208 345,190 340,170|182,208 185,235 160,240 145,232|185,235 210,232 230,215 245,200|210,232 225,245 250,250 260,240 255,220|225,245 228,265 200,270 188,250 185,235|150,225 158,250 182,262 178,278 160,270 155,280 140,282|290,225 290,250 300,262 285,280 260,300 240,320 238,335|320,228 335,245 350,255 360,270 362,295 340,290 300,262|378,190 378,210 388,240 390,285 362,295|388,240 400,250 440,240 440,222 450,217|362,295 370,305 368,325 360,340 372,350 400,345 418,345 418,305 410,290 430,270 440,240|440,240 470,240 475,255 470,270 485,285 482,300 470,312 450,318 445,340 450,350 418,345|470,240 500,235 520,222 540,210 560,200|480,202 505,210 520,222|485,280 530,268 570,252 600,250 640,250|430,270 455,290 465,310|485,300 490,325 500,340 505,355 525,358 558,332 565,305 600,298 634,285|558,332 565,360 590,385 622,405 600,430 592,450|525,358 550,380 580,420 592,450 570,460|622,405 640,380 665,357|505,355 495,385 485,388 460,380 450,350|570,460 600,470 640,490 665,515|197,330 250,335 300,335 305,345 290,355 275,370|197,330 200,300 220,280 245,278 262,290|228,265 225,280|200,270 200,300 165,308 155,310 165,322 160,330|182,262 200,270|300,262 310,290 305,320 310,335 345,335 350,350 345,365 310,360 290,345|310,290 340,310 365,305|140,282 130,300 130,318 155,310 160,285|197,330 190,360 168,362|190,360 225,368 235,385 255,375 275,370 265,390 280,400 250,415|345,365 370,348 380,360 395,385 395,400 325,402 340,395 345,365|380,350 395,345 418,345 435,370 400,385|400,385 430,385 455,380 460,410 470,440 445,465 430,475 420,490 390,472 365,470|395,400 420,430 440,445 447,470|325,402 325,420 310,440 290,450 300,455 330,455 365,455 368,470|160,380 180,390 205,392 225,410 245,415 245,380|135,410 155,420 170,435 200,420 225,425 235,440 245,470 245,490 235,510 215,515 205,495 170,485 160,465 170,435|235,440 270,450 290,450 275,430 280,405 310,400 325,402|245,490 270,470 290,450|235,510 260,525 270,545 265,580 240,590 220,565 210,548 180,558 165,545|170,485 165,520 160,545 165,565 170,590 205,615 240,620 265,585|315,470 320,500 315,530 320,550 345,575 385,560 410,540 422,520 422,490|318,470 325,505 345,500 365,470|345,575 355,600 355,615 325,612 300,600 265,580|422,520 425,555 450,565 480,565 500,535 525,520 515,512 530,490 520,445 490,447 470,445|410,540 415,560 412,575 430,600 470,605 480,575 485,568 515,578 530,570 560,575 575,560 575,540 540,530 520,530|345,575 375,572 380,590 400,600 405,640 375,640 360,620|470,605 465,620 488,638|412,575 405,605|560,575 560,618|575,560 600,560 610,580 605,600|575,540 570,500 570,460|530,490 550,495 570,475|600,560 610,540 640,522 660,525|575,522 595,525 605,550|520,445 540,430 525,420 540,410 545,430 560,445 570,460|470,440 510,435 525,425|300,600 280,625 260,640 250,668|205,615 205,660|145,620 180,650 185,688|170,590 145,620 140,660 90,650 90,630 105,620|130,520 115,530 130,560 130,600 145,620|165,480 130,520 90,520 85,500 100,480 98,460 130,460 160,465|75,390 60,405 45,420 38,435 60,460 60,480 35,500 0,485|60,480 85,500|35,500 30,525 30,550 0,555|30,525 60,530 95,540 100,560 110,600 105,620|30,550 60,555 75,560 70,585 95,590 95,615|0,570 25,570 30,595 70,585|30,595 35,650 50,640 80,650 80,670 65,697|0,632 40,632|35,650 10,665 0,680|45,520 75,520 95,530 90,545 60,550|135,570 165,565|355,615 360,620 368,648`;

/* Midpoint displacement gives the hand-digitised boundaries their small wiggles. */
function rough(line: string, amp: number): string {
  const p = line.trim().split(' ').map((s) => s.split(',').map(Number));
  let out = `M${p[0][0]} ${p[0][1]}`;
  for (let i = 1; i < p.length; i++) {
    const [ax, ay] = p[i - 1];
    const [bx, by] = p[i];
    const len = Math.hypot(bx - ax, by - ay);
    const n = Math.max(1, Math.round(len / 8));
    for (let k = 1; k < n; k++) {
      const x = ax + ((bx - ax) * k) / n;
      const y = ay + ((by - ay) * k) / n;
      const r = (Math.sin(x * 12.9 + y * 78.2) * 43758.5) % 1;
      out += `L${(x - ((by - ay) / len) * r * amp).toFixed(1)} ${(y + ((bx - ax) / len) * r * amp).toFixed(1)}`;
    }
    out += `L${bx} ${by}`;
  }
  return out;
}

function ParishMap() {
  return (
    <svg viewBox="384 169 697 841" className="h-[841px] w-[697px]">
      <defs>
        <linearGradient id="demBase" x1="0" x2="1" y1="0" y2="0">
          <stop offset="0" stopColor="#151515" /><stop offset=".14" stopColor="#4a4a4a" /><stop offset=".35" stopColor="#7c7c7c" /><stop offset=".58" stopColor="#b4b4b4" /><stop offset=".7" stopColor="#a8a8a8" /><stop offset=".8" stopColor="#505050" /><stop offset="1" stopColor="#777" />
        </linearGradient>
        <radialGradient id="demGlow"><stop offset="0" stopColor="#fff" stopOpacity=".7" /><stop offset="1" stopColor="#fff" stopOpacity="0" /></radialGradient>
        <filter id="grain" x="0" y="0" width="1" height="1"><feTurbulence type="fractalNoise" baseFrequency=".05" numOctaves="3" seed="4" /><feColorMatrix values="0 0 0 0 0  0 0 0 0 0  0 0 0 0 0  2 0 0 0 -.8" /></filter>
        <filter id="soft"><feGaussianBlur stdDeviation="2.500" /></filter>
        <clipPath id="demClip"><rect x="168" y="585" width="249" height="111" /></clipPath>
      </defs>
      <g transform="translate(490 360) scale(.33333)" strokeLinejoin="round">
        <path d={rough(outline, 2.5) + 'Z'} fill="#7d8b8f" stroke="#232323" strokeWidth="3" />
        <path d="M168 600l-12 0-9 2 6 6-2 10-5-4M152 596l-6 6" fill="none" stroke="#232323" strokeWidth="3" />
        <g fill="none" stroke="#232323" strokeWidth="2.900">
          <path d={west.split('|').map((l) => rough(l, 3)).join('')} />
          <path transform="translate(690 120)" d={east.split('|').map((l) => rough(l, 3)).join('')} />
        </g>
        <g clipPath="url(#demClip)">
          <rect x="168" y="585" width="249" height="111" fill="url(#demBase)" />
          <ellipse cx="312" cy="630" rx="60" ry="50" fill="url(#demGlow)" />
          <ellipse cx="335" cy="590" rx="28" ry="40" fill="url(#demGlow)" />
          <rect x="168" y="585" width="249" height="111" filter="url(#grain)" opacity=".42" />
          <path d="M160 600c18 20 18 45 38 66l14 10 26-6 24 6 22-2 10 6 24-2 14 6 22-2 20-22 12 6-20 30H160z" fill="#060606" filter="url(#soft)" />
          <path d="M240 702l4-14 14-6 14 6 16-4 20 8 14 10zM318 700l12-6 18-4 4 12z" fill="#8d8d8d" filter="url(#soft)" />
          <path d="M352 700l12-24 10-30 48-10v64z" fill="#b0b0b0" opacity=".55" filter="url(#soft)" />
          <circle cx="408" cy="686" r="4" fill="#fff" />
          <rect x="375" y="582" width="45" height="57" fill="#0b0b0b" />
        </g>
      </g>
    </svg>
  );
}

const Spin = ({ children, w, tw }: { children: string; w: string; tw: number }) => (
  <div className={'flex h-5 shrink-0 items-center rounded-[2px] border border-[#aaa] bg-white pl-1 ' + w}>
    <Fit w={tw}>{children}</Fit>
    <div className="ml-auto flex h-full w-[14px] flex-col items-center justify-center gap-[4px] border-l border-[#bbb] bg-[#f8f8f8]">
      <svg viewBox="0 0 8 4" className="h-1 w-2"><path d="M.5 4h7L4 0z" fill="#555" /></svg>
      <svg viewBox="0 0 8 4" className="h-1 w-2"><path d="M.5 0h7L4 4z" fill="#555" /></svg>
    </div>
  </div>
);
const Clipped = ({ children, w, tw, at = 'justify-end' }: { children: string; w: string; tw: number; at?: string }) => (
  <div className={'flex shrink-0 overflow-hidden ' + w + ' ' + at}><Fit w={tw}>{children}</Fit></div>
);

export default function App() {
  return (
    <div className="flex h-[1037px] w-[1081px] flex-col overflow-hidden border-t border-l border-[#3f3f42] bg-[#f0f0f0] font-['Open_Sans','Noto_Sans',sans-serif] text-[12px] leading-4 text-black">
      <div className="flex h-[30px] shrink-0 items-center bg-white pl-2">
        <svg viewBox="0 0 16 16" className="h-4 w-4" fill="none"><circle cx="7.800" cy="7.800" r="5.900" stroke="#589632" strokeWidth="3.600" /><path d="M8 8h3.500l4 4.500V16h-3.200L8 11z" fill="#7fb13d" stroke="#fff" strokeWidth=".6" /><path d="M6.500 6.500H10L8 8.500l-1.500 1.500z" fill="#ee7913" /></svg>
        <Fit w={143} className="ml-[5px] text-[#8f8f8f]">*Projekt bez nazwy — QGIS</Fit>
        <svg viewBox="0 0 104 12" className="mr-4 ml-auto mb-px h-3 w-[104px]" fill="none" stroke="#888"><path d="M1 6.500h10M92.500 1l10 10M102.500 1l-10 10" /><rect x="46.500" y="1.500" width="9" height="9" /></svg>
      </div>
      <div className="flex h-5 shrink-0 items-center gap-[14px] border-b border-[#d4d4d4] pl-[10px]">
        {menus.map((m, i) => <MenuItem key={i} m={m} />)}
      </div>

      <Bar h="h-[39px]">
        <Grip w="w-[14px] pl-[5px]" />
        {cells([NewFile, Folder, Save, Layout, Manager, StyleIcon])}
        <Grip w="w-[15px] pl-[7px]" />
        <div className="mt-1 flex h-[31px] w-8 shrink-0 items-center justify-center rounded-[3px] border border-[#b0b0b0] bg-[#dcdcdc]"><Hand /></div>
        <div className="w-[2px] shrink-0" />
        {cells([PanSel, ZoomIn, ZoomOut, ZoomFull, ZoomSel, ZoomLayer, ZoomNative, ZoomLast, ZoomNext, NewMap, New3D, Bookmark, Bookmarks, Clock, Refresh])}
        <Grip />
        {cells([Identify, Table, Abacus, Gear, Sigma, Ruler])}
        <Drop dark />
        <div className="w-px shrink-0" />
        {cells([Tip, GearRun])}
        <Drop />
        <div className="flex flex-1 items-center pl-[6px]"><More /></div>
      </Bar>

      <Bar h="h-[39px]">
        <Grip w="w-[14px] pl-[5px]" />
        {cells([DataSrc, NewGpkg, NewShp, NewSpat, Chip])}
        <Sep />
        {cells([Virtual])}
        <Sep />
        <Grip />
        {cells([Pencils, Pencil, SaveEdit, VNew, Vertex])}
        <Drop />
        {cells([EditAttr, Trash, Cut, Copy, Paste, Undo, Redo])}
        <Grip w="w-[15px] pl-[7px]" />
        {cells([LabelDim, Diagram])}
        <Sep />
        {cells([LabelPin, LabelRed])}
        <Sep />
        {cells([LabelPinDim, LabelEye])}
        <div className="flex w-[42px] shrink-0 items-center pl-[26px]"><More /></div>
        <Grip w="w-[11px] pl-[2px]" />
        {cells([MetaSearch])}
        <Grip />
        {cells([Python])}
        <Grip />
        {cells([Help])}
        <Grip />
      </Bar>

      <Bar h="h-[38px]">
        <Grip w="w-[14px] pl-[5px]" />
        {cells([SelRect])}
        <Drop />
        {cells([SelForm])}
        <Drop />
        {cells([Desel])}
        <Drop dark />
        {cells([SelLoc])}
      </Bar>

      <div className="flex h-[844px] shrink-0">
        <div className="flex w-[376px] shrink-0 flex-col">
          <DockTitle title="Przeglądarka" w={67} />
          <div className="flex h-[29px] shrink-0 items-center gap-[9px] pb-[3px] pl-2">
            <S><rect x="1.500" y="1.500" width="11.500" height="12" fill="#f5f5f5" stroke="#888" /><circle cx="12" cy="13" r="2.500" fill="#fff" stroke="#4f9058" strokeWidth="1.500" /></S>
            <S><g transform="scale(.66)"><RefreshG /></g></S>
            <FilterS />
            <TreeS up />
            <S><g transform="scale(.82) translate(.8 .5)"><InfoDisc /></g></S>
          </div>
          <div className="flex h-[411px] shrink-0 border border-[#b0b0b0] bg-white">
            <div className="flex-1 overflow-hidden pt-px">
              {tree.map(([lv, st, Ic, name, w]) => (
                <div key={name + lv} className={'flex h-[18px] items-center ' + pads[lv] + (name === 'porto_parishes' ? ' w-[195px] bg-[#f0f0f0]' : '')}>
                  <Arr open={st === 'o'} none={st === 'n'} />
                  <div className="mr-[6px] mb-px ml-[9px]"><Ic /></div>
                  <Fit w={w}>{name}</Fit>
                </div>
              ))}
            </div>
            <div className="flex w-[14px] shrink-0 flex-col border-l border-[#bdbdbd]">
              <div className="flex h-[14px] items-center justify-center border-b border-[#bdbdbd] bg-[#fafafa]"><svg viewBox="0 0 8 4" className="mr-px h-1 w-2"><path d="M.5 4h7L4 0z" fill="#444" /></svg></div>
              <div className="h-[29px] border-b border-[#bdbdbd] bg-[#e6e6e6]" />
              <div className="h-[209px] bg-linear-to-r from-[#fdfdfd] to-[#f1f1f1]" />
              <div className="flex-1 border-y border-[#bdbdbd] bg-[#e6e6e6]" />
              <div className="flex h-[14px] items-center justify-center bg-[#fafafa]"><svg viewBox="0 0 8 4" className="mr-px h-1 w-2"><path d="M.5 0h7L4 4z" fill="#444" /></svg></div>
            </div>
          </div>
          <div className="flex h-[5px] shrink-0 items-center justify-center gap-[2px]">
            {[0, 1, 2, 3, 4, 5].map((i) => <i key={i} className="h-px w-px bg-[#a5a5a5]" />)}
          </div>
          <DockTitle title="Warstwy" w={45} />
          <div className="flex h-[29px] shrink-0 items-center gap-[9px] pb-[3px] pl-2">
            <S><path d="M1 5l5 1 5 5-4 3-5-1-1-3z" fill="#e9b92b" /><path d="M1 4l4 1 1 5-4 1z" fill="#e14b38" /><path d="M5 9l4 1-1 4-4-1z" fill="#e8d42b" /><path d="M2 10l3 1-1 3-3-2z" fill="#7fa6d6" /><path d="M14.500 2L9 7" stroke="#b8801e" strokeWidth="2.200" /><path d="M7 5l5 4.500-3 2.500-5-5z" fill="#e58a2f" /></S>
            <S><path d="M1.500 6.500h7v8h-7zM4.500 4.500h7v8h-7zM6.500 2.500h7v8h-7z" fill="#f5f5f5" stroke="#777" /><path d="M7.500 10V2c0-2 2.500-2 2.500 0v6" stroke="#555" /><rect x="9.500" y="9.500" width="6" height="6" fill="#4b9457" /><path d="M12.500 10.500v4M10.500 12.500h4" stroke="#fff" /></S>
            <S><path d="M.5 8c4-6 10-6 15 0-4 5-11 5-15 0z" fill="#eee" stroke="#999" /><circle cx="8" cy="7.500" r="3.400" fill="#5e86b4" /><circle cx="8" cy="7.500" r="1.600" fill="#223" /><path d="M11.500 13h5.500l-2.700 3z" fill="#444" /></S>
            <FilterS />
            <div className="flex">
              <S><g opacity=".5"><path d="M7.500 2C3 0 1 5 5 6 0 7 2 12 7 9.500" stroke="#999" strokeWidth="1.500" /><path d="M8 9h7v4c0 2-3 2-3 0v-2M8 9v5" stroke="#aaa" strokeWidth="2" /></g></S>
              <div className="w-[6px]" /><Drop />
            </div>
            <div className="-ml-[5px]"><TreeS /></div>
            <TreeS up />
            <S><rect x=".5" y="1.500" width="12" height="12" fill="#f5f5f5" stroke="#888" /><rect x="8" y="10" width="7" height="5" rx="1" fill="#e94b4b" /><path d="M9.500 12.500h4" stroke="#fff" /></S>
          </div>
          <div className="h-[326px] shrink-0 border border-[#b0b0b0] bg-white pt-px">
            <Lyr icon={<i className="h-[2px] w-[14px] bg-[#a5c795]" />} name="railroad" w={46} cls="-ml-[2px] font-bold italic text-[#808080]" />
            <Lyr arrow on icon={<RasS />} name="intersects" w={55} cls="font-bold" />
            <Leg black t="-9" w={11} />
            <Leg t="185" w={18} />
            <Lyr on icon={<i className="mb-[2px] h-4 w-4 border border-[#5a6568] bg-[#7d8b8f]" />} name="porto_parishes" w={81} cls="font-bold" />
            <Lyr icon={<i className="mb-px h-[7px] w-[7px] rounded-full border border-[#5e3a28] bg-[#96502d]" />} name="places" w={35} />
            <Lyr icon={<RasS />} name="landsat8" w={49} />
            <Lyr arrow icon={<RasS />} name="dem" w={24} cls="font-bold italic text-[#808080] underline underline-offset-2" sel />
            <Leg black t="-8" w={11} />
            <Leg t="1213" w={24} />
          </div>
        </div>
        <div className="flex w-[6px] shrink-0 flex-col items-center justify-center gap-[2px]">
          {[0, 1, 2, 3, 4, 5].map((i) => <i key={i} className="h-px w-px bg-[#a5a5a5]" />)}
        </div>
        <div className="mt-px flex-1 overflow-hidden border border-r-0 border-[#b0b0b0] bg-white"><ParishMap /></div>
      </div>

      <div className="flex min-h-0 flex-1 items-center pt-[2px] pl-1 text-[11px]">
        <div className="flex h-[21px] w-[200px] shrink-0 items-center rounded-[2px] border border-[#aaa] bg-white pl-2">
          <svg viewBox="0 0 12 12" className="mr-[7px] h-3 w-3" fill="none" stroke="#8a8a8a" strokeWidth="1.200"><circle cx="5" cy="5" r="4" /><path d="M8 8l3.500 3.500" /></svg>
          <Fit w={111} className="text-[#7c7c7c]">Szukana fraza (Ctrl+K)</Fit>
        </div>
        <div className="w-[42px] shrink-0" />
        <Clipped w="w-[57px]" tw={62}>Współrzędne</Clipped>
        <div className="ml-[3px] flex h-5 w-[84px] shrink-0 items-center justify-center rounded-[2px] border border-[#aaa] bg-white"><Fit w={71}>41863,165639</Fit></div>
        <svg viewBox="0 0 16 16" className="ml-1 h-4 w-4 shrink-0" fill="none" stroke="#222"><path d="M2 2l5 5M1 6l5 3M5 1l3 4" strokeWidth="1.800" /><path d="M6 4l4-3 2 1-2 4zM3 9l4-5 6 5-2 5-5 1z" fill="#ddd" /><circle cx="10" cy="11" r="3.500" fill="#eee" /><path d="M8 12l4-3M12 6l3-3M13 8l2-1" strokeWidth="1.300" /></svg>
        <div className="w-[13px] shrink-0" />
        <Clipped w="w-5" tw={28} at="justify-center">Skala</Clipped>
        <div className="ml-[3px] flex h-5 w-[80px] shrink-0 items-center rounded-[2px] border border-[#aaa] bg-white pl-[3px]">
          <Fit w={46}>1:643258</Fit>
          <div className="ml-auto flex h-full w-[19px] items-center justify-center border-l border-[#bbb] bg-[#f8f8f8]"><svg viewBox="0 0 8 4" className="mr-px h-1 w-2"><path d="M.5 0h7L4 4z" fill="#444" /></svg></div>
        </div>
        <svg viewBox="0 0 12 16" className="ml-[13px] h-4 w-3 shrink-0" fill="none"><path d="M2.500 8V5a3.500 3.500 0 0 1 7 0v3" stroke="#888" strokeWidth="1.600" /><rect y="7.500" width="12" height="8" rx="1" fill="#555" /></svg>
        <div className="ml-2 flex"><Clipped w="w-[60px]" tw={63}>Powiększenie</Clipped></div>
        <div className="w-[2px] shrink-0" />
        <Spin w="w-[87px]" tw={29}>100%</Spin>
        <div className="w-[9px] shrink-0" />
        <Clipped w="w-[46px]" tw={53} at="justify-center">Kąt obrotu</Clipped>
        <div className="w-[9px] shrink-0" />
        <Spin w="w-[84px]" tw={25}>0,0 °</Spin>
        <div className="w-[6px] shrink-0" />
        <Check on />
        <Fit w={45} className="ml-1">Renderuj</Fit>
        <svg viewBox="0 0 14 14" className="ml-[18px] h-[14px] w-[14px] shrink-0" fill="none"><path d="M7 0L14 7 7 14 0 7z" fill="#777" stroke="#777" strokeLinejoin="round" /><ellipse cx="7" cy="7" rx="6" ry="5.500" fill="#777" /><path d="M7 0v14M0 7h14M2 4h10M2 10h10M4.500 1.500c-2 4-2 7 0 11M9.500 1.500c2 4 2 7 0 11" stroke="#dcdcdc" strokeWidth=".8" /></svg>
        <Fit w={54} className="ml-1">EPSG:3763</Fit>
        <svg viewBox="0 0 16 16" className="ml-[19px] h-4 w-4 shrink-0"><path d="M8 1.500c4.500 0 8 2.500 8 5.500s-2 4-3 5l1 3.500c-3 0-4.500-1-5.500-2.500C3.500 12.500 0 10 0 7s3.500-5.500 8-5.500z" fill="#5c5c5c" /><path d="M3.500 6h2v2h-2zM7 6h2v2H7zM10.500 6h2v2h-2z" fill="#fff" /></svg>
        <svg viewBox="0 0 12 12" className="ml-auto h-3 w-3 self-end" fill="#b0b0b0"><path d="M9 1h1v1H9zM6 4h1v1H6zM9 4h1v1H9zM3 7h1v1H3zM6 7h1v1H6zM9 7h1v1H9zM0 10h1v1H0zM3 10h1v1H3zM6 10h1v1H6zM9 10h1v1H9z" /></svg>
      </div>
    </div>
  );
}
